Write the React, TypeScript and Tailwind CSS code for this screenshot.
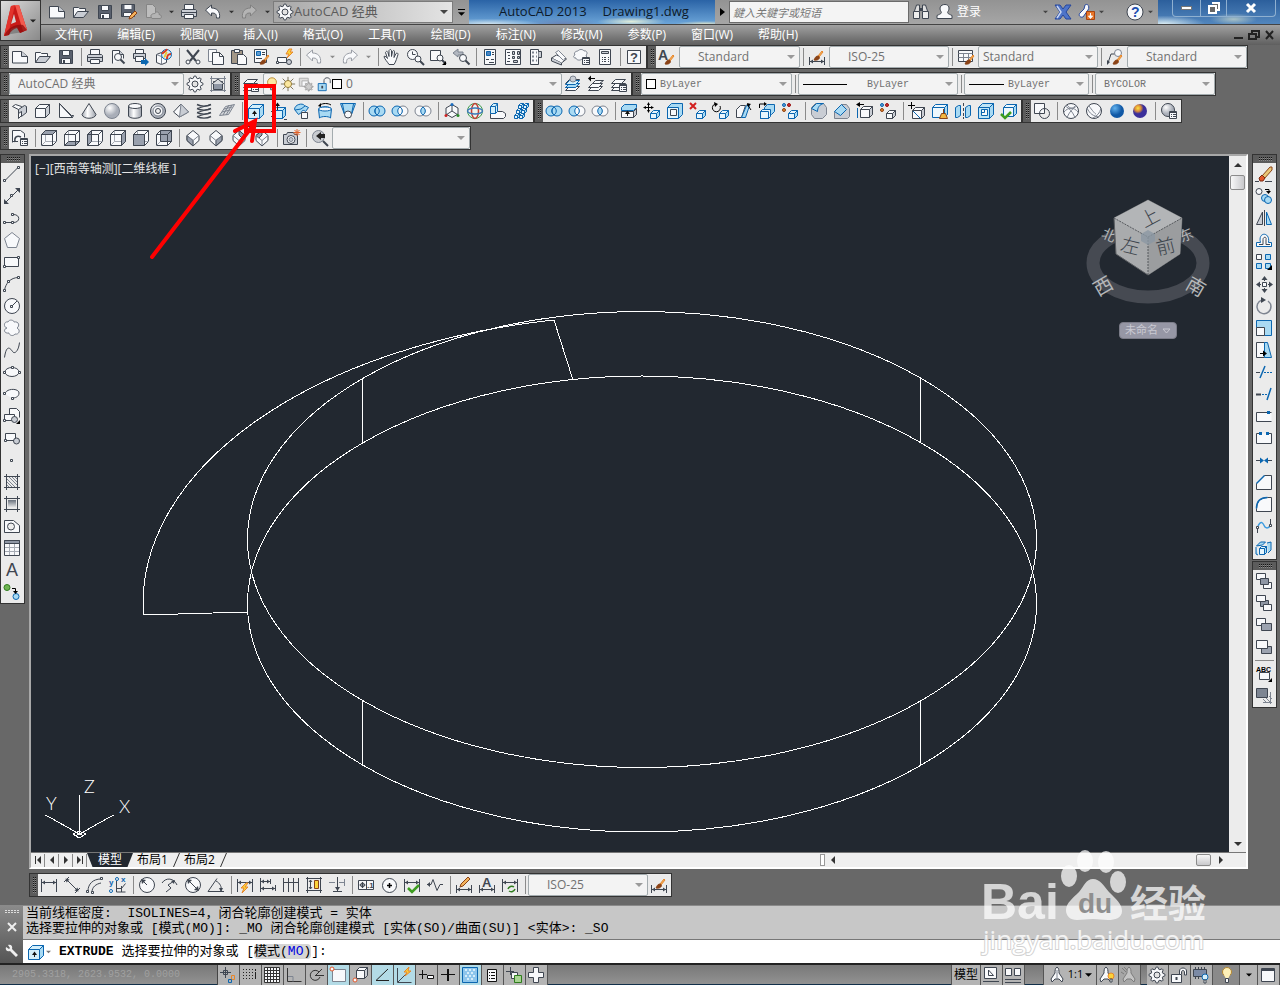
import { useState } from 'react';
import type { ReactNode } from 'react';

type Path = [d: string, stroke?: string, fill?: string, width?: number];
type Glyph = { t: string; x: number; y: number; size: number; fill?: string; bold?: boolean };
type Shape = Path | Glyph;

const K = '#3f4651';
const W = '#f8f9fb';
const G = '#c9cdd4';
const D = '#7d8490';
const B = '#0b66b0';
const LB = '#a9daf3';
const N = 'none';
const OR = '#e8862a';
const BR = '#8a4216';

const c = (x: number, y: number, r: number) => `M${x - r} ${y}a${r} ${r} 0 1 0 ${r * 2} 0a${r} ${r} 0 1 0 ${-r * 2} 0z`;
const el = (x: number, y: number, rx: number, ry: number) =>
  `M${x - rx} ${y}a${rx} ${ry} 0 1 0 ${rx * 2} 0a${rx} ${ry} 0 1 0 ${-rx * 2} 0z`;
const r = (x: number, y: number, w: number, h: number) => `M${x} ${y}h${w}v${h}h${-w}z`;
const node = (x: number, y: number): Path => [r(x + 0.5, y + 0.5, 2, 2), K, W];

const cube = (x: number, y: number, w: number, h: number, d: number, s = K, f = W, side = G): Shape[] => [
  [`M${x} ${y + d}l${d} ${-d}h${w}v${h}l${-d} ${d}h${-w}z`, s, f],
  [`M${x + w} ${y + d}l${d} ${-d}v${h}l${-d} ${d}z`, s, side],
  [`M${x} ${y + d}h${w}`, s],
];

const gear = (x: number, y: number, ro: number, ri: number, n = 8) => {
  let d = '';
  for (let i = 0; i < n * 4; i++) {
    const a = ((i - 0.5) / (n * 4)) * Math.PI * 2;
    const q = i % 4 < 2 ? ro : ri;
    d += `${i ? 'L' : 'M'}${(x + Math.cos(a) * q).toFixed(2)} ${(y + Math.sin(a) * q).toFixed(2)}`;
  }
  return d + 'z';
};

const brush = (x: number, y: number): Shape[] => [
  [`M${x + 4} ${y + 4}l4 -5 1 1 -4 5z`, OR, '#f3b25c'],
  [`M${x} ${y + 8}c1 -1 1 -4 4 -4 3 1 1 5 -4 4z`, BR, BR],
];
const magnifier = (x: number, y: number, q: number): Shape[] => [
  [c(x, y, q), K, W],
  [`M${x + q - 1} ${y + q - 1}l4 4`, K, N, 2],
];
const listBadge: Shape[] = [
  [r(9.5, 9.5, 7, 7), K, W],
  ['M9 10.5h8', K],
  ['M11 12.5h1M13 12.5h3M11 14.5h1M13 14.5h3', K],
];
const dimBase: Shape[] = [['M1.5 3v13M16.5 3v13', K], ['M2 6.5h14', K], ['M5 4.5l-3 2 3 2zM13 4.5l3 2-3 2z', N, K]];
const dimLow: Shape[] = [['M1.5 9v8M16.5 9v8', K], ['M2 13.5h14', K], ['M5 11.5l-3 2 3 2zM13 11.5l3 2-3 2z', N, K]];
const viewCube = (face: string): Shape[] => [
  ['M1.5 5.5l4-4h11v11l-4 4h-11z', K, W],
  ['M5.5 2v10.5h11M5.5 12.5l-4 4', '#a6abb4'],
  [face, K, '#99a0ad'],
  ['M1.5 5.5h11v11M12.5 5.5l4-4', K],
];
const iso = (face: string): Shape[] => [
  ['M9 1.5l6 5v5l-6 5.5-6-5.500v-5z', K, W],
  [face, K, '#99a0ad'],
  ['M3 6.5l6 5 6-5M9 11.5v5', D],
];
const stack = (f: string): Shape[] => [
  ['M1.5 15.5l4-4h10l-4 4z', K, W],
  ['M1.5 12.5l4-4h10l-4 4z', K, W],
  ['M1.5 8.5l4-4h10l-4 4z', K, f],
];
const smallCube = cube(7.5, 8.5, 6, 5, 3, B, '#e7f5fd', LB);
const upArrow = (x: number, y: number, h: number): Shape[] => [
  [`M${x} ${y + h}v${-h + 1}`, '#222'],
  [`M${x - 2.5} ${y + 3}l2.5 -3.500 2.5 3.500z`, N, '#111'],
];
const miniCube = (x: number, y: number) => cube(x, y, 3, 3, 2, B, '#e5f5fd', LB);

const icons: Record<string, Shape[]> = {
  new: [['M1.5 3.5h9l6 5v6.5h-15z', K, W], ['M10.5 3.5v5h6', K, G]],
  open: [['M1.5 14.5v-10h5l1 1h6v3', K, W], ['M1.5 14.5l4-6h11l-5 6z', K, G]],
  save: [[r(2.5, 2.5, 13, 13), K, '#5a616e'], [r(5.5, 2.5, 7, 5), K, W], [r(4.5, 10.5, 9, 5), K, W], [r(6, 12, 2, 3), N, K]],
  saveas: [[r(1.5, 1.5, 13, 12), K, '#5a616e'], [r(4.5, 2, 7, 4), N, W], [r(3.5, 9.5, 8, 4), K, W], ['M9 16l1-3 5-5 2 2-5 5z', BR, '#f3b25c']],
  cloud: [['M2.5 1.5h6l3 3v10h-9z', '#858585', '#bdbdbd'], ['M8 15.5c-3-4 1-5 3-5 1-3 5-1 4 1 3 0 3 4 1 4z', '#858585', '#b4b4b4']],
  print: [['M4.5 7v-5.5h9v5.5', K, W], ['M1.5 7.5l1-1h13l1 1v6h-15z', K, G], ['M2 9.5h14', K], [r(4.5, 11.5, 9, 4), K, W]],
  preview: [['M3.5 15.5v-13h7l4 4v4', K, W], ['M10.5 2.5v4h4', K, G], ...magnifier(9, 9, 3.5)],
  publish: [['M3.5 5v-3.5h8v3.5', K, W], [r(1.5, 5.5, 12, 5), K, G], [r(3.5, 8.5, 8, 5), K, W], ['M9 12h4v-2l4 4-4 4v-2h-4z', N, B]],
  globe: [['M1.5 6.5l5-2 5 2v8l-5 2-5-2z', K, W], ['M1.5 6.5l5 2 5-2M6.5 8.5v8', D], [c(11.5, 6.5, 5), B, '#d6effa'], ['M7 6c2-3 4-2 5-5M12 11c0-5 2-5 4-5', '#d93820', N, 2], ['M9 9c2-1 1-3 3-5', '#e9c93c', N, 2]],
  cut: [['M3 2l9 11M15 2l-9 11', K, N, 2], [c(4, 14, 2), K, W], [c(14, 14, 2), K, W]],
  copy: [[r(1.5, 1.5, 8, 12), D, W], ['M5.5 4.5h7l4 4v8h-11z', K, W], ['M12.5 4.5v4h4', K]],
  paste: [[r(1.5, 2.5, 11, 13), K, '#a39787'], [r(4.5, 1.5, 5, 3), K, W], ['M7.5 6.5h6l3 3v7h-9z', K, W]],
  match: [[r(1.5, 1.5, 12, 13), K, W], [r(3.5, 3.5, 4, 4), B, '#5e9bd0'], ['M9 4.5h3M9 6.5h3M3 10.5h6', K], ...brush(7, 8)],
  blockedit: [[r(1.5, 9.5, 9, 5), K, W], node(0, 13), [c(13, 14, 2.5), K, G], ['M13 1l-3 5h3l-2 4 6-6h-3l2-3z', OR, '#fbd23a']],
  undo: [['M1.5 7l6-5v3c5 0 9 3 8 10h-3c0-4-1-5-5-5v3z', K, W]],
  redo: [['M16.5 7l-6-5v3c-5 0-9 3-8 10h3c0-4 1-5 5-5v3z', '#808080', '#b4b4b4']],
  undo2: [['M1.5 7l6-5v3c5 0 9 3 8 10h-3c0-4-1-5-5-5v3z', '#9a9ea6', W]],
  redo2: [['M16.5 7l-6-5v3c-5 0-9 3-8 10h3c0-4 1-5 5-5v3z', '#9a9ea6', W]],
  pan: [['M6 16.500c-1-2-5-6-5-8 1-1 3 1 3.500 2l-2-6c1-2 2-1 2.500 0l1 4v-6c1-1.500 2-1 2.500 0v6l1-5c1-1.500 2-1 2 0l-.500 6 2-4c1-1 2.500 0 2 1-1 3-2 7-4 10z', K, W]],
  zoomrt: [[c(6.5, 6.5, 5), K, W], ['M6.5 3.5v3h3', K], ...magnifier(12, 11, 3)],
  zoomwin: [[r(1.5, 2.5, 10, 10), K, W], ...magnifier(11, 10, 3), ['M17 13v4h-4z', N, '#000']],
  zoomprev: [['M1 5l5-4v3h5v3h-5v2z', D, '#b2b7c0'], ...magnifier(11, 10, 3.5)],
  props: [[r(3.5, 1.5, 11, 15), K, W], [r(5.5, 3.5, 4, 4), B, '#4d83bc'], ['M11 4.5h2M11 6.5h2', K], ['M5 11.5h3M10 11.5h3M8 14.5h5', K]],
  dc: [[r(1.5, 1.5, 15, 15), K, W], ['M3 4.5h3M4 7.5h2M4 10.5h2M3 13.5h3', K], ['M8.5 3.5h2v3h-2zM13.5 3.5h2v3h-2zM8.5 8.5h2v2h-2zM13.5 8.5h2v2h-2zM9.5 12.5h4v2h-4z', K, G]],
  toolpal: [[r(3.5, 1.5, 8, 15), K, W], ['M5 4.5h2M9 4.5h1M5 8.5h2M9 8.5h1M5 12.5h2M9 12.5h1', D, N, 2], ['M11.5 3.5h3v6h-3', K, G]],
  sheetset: [['M1.5 10l5-3 10 4-5 4z', K, W], ['M5.5 4.5l3-2 7 7-2 3z', D, W], ['M1.5 10v3l10 4v-2', K, G]],
  markup: [['M2 7c-2-3 2-4 3-4 1-2 5-2 6 0 3-1 4 3 2 4 2 3-2 5-4 4-2 2-6 1-6-1-3 0-3-2-1-3z', D, W], ...listBadge],
  calc: [[r(3.5, 1.5, 11, 15), K, W], [r(5.5, 3.5, 7, 2), K, G], ['M6 9.5h1M8 9.5h2M12 9.5h1M6 11.5h1M8 11.5h2M12 11.5h1M6 13.5h1M8 13.5h2M12 13.5h1', K]],
  help: [[r(2.5, 2.5, 13, 13), K, W], { t: '?', x: 5, y: 14, size: 13, bold: true }],
  textstyle: [{ t: 'A', x: 0, y: 12, size: 14, bold: true }, ...brush(7, 8)],
  dimstyle: [...dimLow, ...brush(6, 4)],
  tablestyle: [[r(1.5, 2.5, 14, 11), K, W], ['M1.5 5.5h14M1.5 9.5h14M6.5 5v8M11.5 5v8', D], ...brush(8, 8)],
  mleader: [['M2 15l3-9h4', K], ['M1 12v5l3-3z', N, K], [c(12, 5, 3.5), D, W], ...brush(7, 8)],
  gear: [[gear(9, 9, 8, 6), K, W], [c(9, 9, 3), K, '#e4e4e4']],
  wsset: [['M2.5 1v16M15.5 1v16M1 3.5h16M1 15.5h16', D, N], [r(4.5, 6.5, 9, 8), K, '#8e96a4'], ['M3 9l6-5 6 5', K, '#d7dade']],
  layers: [...stack(W), ...listBadge],
  bulb: [[c(9, 7, 5), '#b5862e', '#fce9a4'], [r(7.5, 12.5, 3, 3), K, G]],
  sun: [['M9 1v16M1 9h16M3 3l12 12M15 3l-12 12', '#70684e'], [c(9, 9, 4), '#8f7430', '#fbe8a0']],
  vpfreeze: [[r(1.5, 2.5, 10, 9), '#aaa', '#ddd'], [r(4.5, 5.5, 7, 6), '#aaa', W], [gear(12, 12, 5, 3), '#999', '#ccc']],
  lock: [['M9 9v-4c0-4 7-4 7 0v3', K], [r(2.5, 8.5, 9, 8), B, LB], ['M7 11v3', K, N, 2]],
  layerA: [...stack(W), ['M1.5 12.5l4-4h10l-4 4z', B, LB], ['M1.5 9.5l4-4h10l-4 4z', B, '#d3effb'], [c(9, 4, 3), D, G]],
  layerB: [...stack(W).slice(0, 2), ['M5.5 8.5l3-3h8l-4 3z', K, W], ['M3 3.5h5', '#000'], ['M1 3.5l3-3v6z', N, '#000']],
  layerC: [...stack(W), ...listBadge],
  polysolid: [['M1.5 4.5l3-2 6 2v9l-3 3v-9z', K, W], ['M7.5 7.5l6-4 2 1v6l-5 4v-5l-3 2z', K, G]],
  box: cube(1.5, 2.5, 10, 9, 4),
  wedge: [['M2.5 1.5v14h13z', K, W], ['M2.5 1.5l12 12h2l-1 2z', K, G]],
  cone: [['M9 1.5l-7 11c1 5 13 5 14 0z', K, 'url(#metal)']],
  sphere: [[c(9, 9, 7.5), D, 'url(#steel)']],
  cylinder: [['M2.5 4v10c1 3 12 3 13 0v-10', K, 'url(#metal)'], [el(9, 4, 6.5, 2.5), K, W]],
  torus: [[c(9, 9, 7.5), K, 'url(#steel)'], [c(9, 9, 5), D, W], [c(9, 9, 2.5), K, '#eee']],
  pyramid: [['M9 2l-7.5 8 6 5 9-5z', K, W], ['M9 2l-1.5 13 9-5z', D, G]],
  helix: [['M2 2.5c4 2 10 2 14 0M2 6.5c4 2 10 2 14 0M2 10.5c4 2 10 2 14 0M2 14.5c4 2 10 2 14 0', K, N, 1.5], ['M2 6.5l14-4M2 10.5l14-4M2 14.5l14-4', K]],
  planesurf: [['M1.5 13.5l6-9 9-2-6 10z', D, '#d6d9dd'], ['M4 10l8-2M6 7l8-2M5 13l6-10M8 13l6-10', D]],
  extrude: [...cube(1.5, 2.5, 11, 10, 4, B, '#d3effb', LB), ...upArrow(7.5, 9, 5)],
  presspull: [...cube(3.5, 5.5, 9, 8, 3, B, '#d3effb', LB), ...upArrow(7.5, 1, 7), ['M1 9.5h3M1 14.5h3M14 17.5h3', K]],
  sweep: [['M1.5 7.5c0-5 8-7 10-4l4 2-3 4c-2-2-4-1-4 1l-3 2z', B, LB], ['M2 8l6-1 4-3', B], [r(8.5, 10.5, 6, 6), K, W]],
  revolve: [['M2.5 7c3-3 11-3 13 0l-1 9c-2-2-9-2-11 0z', B, LB], [el(9, 7, 6.5, 2), B, W], ['M4 3c3-2 8-2 11 0', '#000'], ['M2 4l3-3v4z', N, '#000']],
  loft: [['M1.5 1.5h15l-4 11c-2 3-5 3-7 0z', B, LB], ['M5.5 12l-2-10M12.5 12l2-10', B], [c(9, 12.5, 3.5), K, W]],
  union: [[c(6, 9, 5), B, LB], [c(12, 9, 5), B, LB], ['M9 5c-3 2-3 6 0 8 3-2 3-6 0-8z', B, N]],
  subtract: [[c(12, 9, 5), D, W], [c(6, 9, 5), B, LB], ['M9 5c-3 2-3 6 0 8 3-2 3-6 0-8z', B, W]],
  intersect: [[c(12, 9, 5), D, W], [c(6, 9, 5), D, W], ['M9 5c-3 2-3 6 0 8 3-2 3-6 0-8z', B, LB]],
  move3d: [['M9 2.5l6 3.5v6l-6 3.5-6-3.5v-6z', K, W], ['M9 2v7l6 4M9 9l-6 4', K], [c(9, 2.5, 1.5), N, '#1a6cc0'], [c(3, 13.5, 1.5), N, '#c22'], [c(15, 13.5, 1.5), N, '#2a8a2a']],
  rotate3d: [[c(9, 9, 7.5), '#3c9b4c', '#eef3ee'], [el(9, 9, 3.5, 7.5), '#c33f33', N, 1.5], [el(9, 9, 7.5, 3), '#3c7ab8', N, 1.5]],
  align3d: [['M1.5 11.5l2-2h10l3 2v3l-2 2h-13z', K, W], ['M1.5 4.5l3-3h4v8l-2 2h-5z', B, '#d3effb'], ['M1.5 4.5h5l2-3M6.5 4.5v7', B]],
  array3d: [...miniCube(6.5, 1.5), ...miniCube(11.5, 1.5), ...miniCube(4.5, 6.5), ...miniCube(9.5, 6.5), ...miniCube(2.5, 11.5), ...miniCube(7.5, 11.5)],
  extrudeface: [...cube(1.5, 6.5, 12, 6, 3, K, W, G), ['M1.5 5.5l3-3h12v3l-3 3h-12z', B, LB], ...upArrow(7.5, 9, 5)],
  moveface: [...smallCube, ['M5.5 1v9M1 5.5h9', '#000'], ['M4 3l1.5-3 1.500 3zM4 8l1.500 3 1.500-3zM3 4l-3 1.500 3 1.500zM8 4l3 1.500-3 1.500z', N, '#000']],
  offsetface: [['M1.5 5.5l4-4h11v11l-4 4h-11z', B, LB], [r(1.5, 5.5, 11, 11), B, '#e5f5fd'], [r(4.5, 7.5, 6, 6), K, W]],
  deleteface: [...smallCube, ['M1 1l6 6M7 1l-6 6', '#d21f1f', N, 2]],
  rotateface: [...smallCube, ['M3 2a4 4 0 1 0 5 2', '#000', N], ['M2 0l4 2-3 3z', N, '#000']],
  taperface: [['M1.5 15.5v-8l4-4h5l-4 12z', K, W], ['M6.5 15.5l5-12h3l-4 12z', B, LB], ['M16 8l-4-6', '#000'], ['M12 1l4 1-3 3z', N, '#000']],
  copyface: [['M6.5 5.5l3-3h7v7l-3 3h-7z', B, LB], ['M2.5 9.5l2-2h8v7l-2 2h-8z', B, '#e5f5fd'], [r(2.5, 9.5, 8, 7), B, N], ['M1.5 6v-4h6', '#000'], ['M6 0l3 2-3 2z', N, '#000']],
  colorface: [...smallCube, [c(3, 3, 1.5), B, '#5b9bd5'], [c(8, 3, 1.5), '#911', '#c33'], [c(3, 8, 1.5), BR, OR]],
  filletedge: [['M1.5 12.5v-7l4-4h8l3 4v7l-4 4h-8z', D, G], ['M1.5 6.500l5-5h7c-4 1-6 4-6 8z', B, LB]],
  chamferedge: [['M1.5 9.5l7-7h5l3 4v8l-2 2h-13z', D, G], ['M1.5 9.5l7-7 5 5-6 6z', B, LB]],
  copyedge: [...cube(4.5, 4.5, 9, 8, 3), ['M1.5 6v10', B], ['M3 2.5h5', '#000'], ['M0 2.5l4-2.500v5z', N, '#000']],
  coloredge: [...cube(7.5, 8.5, 6, 5, 3), [c(3, 3, 1.5), B, '#5b9bd5'], [c(8, 3, 1.5), '#911', '#c33'], [c(3, 8, 1.5), BR, OR]],
  imprint: [...cube(4.5, 5.5, 9, 8, 3), ['M5 9l8 8', B], ['M3.5 0v7M0 3.5h7', '#000']],
  clean: [...cube(1.5, 2.5, 12, 10, 3, B, '#eef8fd', LB), ['M12.5 7v4M10.5 11.5h4l2 5h-8z', BR, '#f3b640']],
  separate: [['M1.5 5.5l3-2h2v10l-3 2h-2z', B, LB], ['M11.5 5.5l3-2h2v10l-3 2h-2z', B, LB], ['M9.5 1v3M9.5 6v3M9.5 11v3M9.5 15v2', K]],
  shell: [...cube(1.5, 1.5, 11, 11, 4, B, '#bfe5f7', LB), [r(4.5, 7.5, 6, 6), B, W], ['M4.5 10.5h3v-3', B]],
  check: [...cube(3.5, 2.5, 10, 9, 3, B, '#eef8fd', LB), ['M1 12l4 4 6-6', '#3d9d20', N, 2.5]],
  wire2d: [[r(1.5, 1.5, 10, 10), K, W], [c(11.5, 11.5, 5), K, N]],
  wire3d: [[c(9, 9, 7.5), K, W], ['M3 4c4 2 8 6 10 12M15 4c-4 2-8 6-10 12M2 10c4-5 10-5 14 0M5 3c3 4 6 4 9 0', D]],
  hidden: [[c(9, 9, 7.5), K, W], ['M2 6c3 6 6 8 12 9M16 6c-1 5-4 8-8 10M4 4c3 4 6 8 7 8', D]],
  realistic: [[c(9, 9, 7), N, 'url(#blue)']],
  conceptual: [[c(9, 9, 7), N, 'url(#gooch)']],
  vsmanager: [[c(8, 8, 6.5), K, 'url(#steel)'], ...listBadge],
  namedview: [['M1.5 13.5v-12h8l4 3v4', K, W], ['M4 13c-1-5 2-7 6-5', K, N, 1.5], ['M1 12.5h6', K], ...listBadge],
  vtop: viewCube('M1.5 5.5l4-4h11l-4 4z'),
  vbottom: viewCube('M1.5 16.5l4-4h11l-4 4z'),
  vleft: viewCube('M1.5 5.5l4-4v11l-4 4z'),
  vright: viewCube('M12.5 5.5l4-4v11l-4 4z'),
  vfront: viewCube('M1.5 5.5h11v11h-11z'),
  vback: viewCube('M5.5 1.5h11v11h-11z'),
  sw: iso('M3 6.5l6 5v5.500l-6-5.500z'),
  se: iso('M9 11.5l6-5v5l-6 5.500z'),
  ne: iso('M9 1.500l6 5-3 2.500-3-3z'),
  nw: iso('M9 1.500l-6 5 3 2.500 3-3z'),
  camera: [['M1.5 5.5h3l1-2h6l1 2h3v10h-14z', K, G], [c(9, 10.5, 4), K, W], [c(9, 10.5, 2), D, G], ['M15 0v7M11.5 3.5h7M12.5 1l5 5M17.5 1l-5 5', '#e2632a']],
  camzoom: [[c(7.5, 7.5, 6), D, '#c9ccd1'], ['M5 7l5-4v2h4v4h-4v2z', N, '#222'], ['M12 12l5 5', K, N, 2]],
  line: [['M2 15.5l13-13', K], node(0, 14), node(14, 1)],
  xline: [['M2 16l14-14', K], ['M1 12v5h5zM17 6v-5h-5z', N, K], node(7, 7)],
  pline: [['M1.5 13.5h9c7 0 7-8 0-8', K], node(0, 12), node(8, 12), node(8, 4)],
  polygon: [['M9 1.5l7.5 6-3 9h-9l-3-9z', D, W]],
  rect: [[r(1.5, 4.5, 14, 9), K, W], node(0, 12), node(14, 3)],
  arc: [['M1.5 15.5c1-7 6-13 14-13', K], node(0, 14), node(4, 5), node(14, 1)],
  circle: [[c(9, 9, 7.5), K, W], ['M9 9l5-5', K], node(7, 8)],
  revcloud: [['M4 9c-4-1-3-7 1-6 1-3 6-2 6 0 5-1 6 4 3 6 4 2 2 7-2 6-2 3-6 1-6-1-5 1-6-4-2-5z', D, W]],
  spline: [['M1.5 16.500c2-14 6-9 8-6s6 0 7-9', K]],
  ellipse: [[el(9, 9, 7, 4.5), K, W], node(0, 8), node(15, 8), node(8, 3)],
  ellipsearc: [['M2 9c1-6 14-6 14-1 0 4-4 5-7 5', K, W], node(0, 7), node(8, 12)],
  insert: [['M6.5 9.5v-8h7l3 3v6', K, W], [r(1.5, 7.5, 10, 6), K, W], [c(11.5, 12.5, 3), K, G], node(0, 12), ['M17 13v4h-4z', N, '#000']],
  block: [[r(2.5, 4.5, 10, 7), K, W], [c(13.5, 12, 3), K, G], node(1, 10)],
  point: [node(7, 8)],
  hatch: [['M3.5 1v16M14.5 1v16M1 3.5h16M1 14.5h16', K], ['M4 6l8 8M4 9l5 5M6 4l8 8M9 4l5 5M4 12l2 2M12 4l2 2', D]],
  gradient: [['M3.5 1v16M14.5 1v16M1 3.5h16M1 14.5h16', K], [r(5, 5, 8, 8), N, 'url(#fade)']],
  region: [['M1.5 3.5h9l6 5v7h-15z', K, W], [c(8, 9.5, 3.5), K, '#eee']],
  table: [[r(1.5, 1.5, 15, 15), K, W], [r(1.5, 1.5, 15, 3), K, '#8e96a4'], ['M2 8.5h14M2 12.5h14M6.5 5v11M11.5 5v11', '#a6abb4']],
  mtext: [{ t: 'A', x: 3, y: 15, size: 18 }],
  addsel: [[c(4, 4.5, 3), '#2f7d1d', '#6fb552'], [c(13, 13.5, 3), B, LB], ['M9 5.5h3.5v3', '#000'], ['M10 8h5l-2.500 3z', N, '#000']],
  erase: [['M7 11l8-9 2 0v3l-8 9z', BR, '#e9c777'], ['M4 13l3-3 3 3-2 3h-3z', '#7a2a10', '#e2572b'], ['M0 16.5h4M10 16.5h7', K]],
  copyobj: [[c(4, 4.5, 3), K, W], [c(10, 11, 3.5), B, LB], [c(13, 13, 3.5), B, LB], ['M10 2.5h4v2', '#000'], ['M11 4h5l-2.500 3z', N, '#000']],
  mirror: [['M7.5 3v12.5h-6z', K, G], ['M11.5 3v12.5h5z', B, LB], ['M9.5 1v16', K]],
  offset: [['M1.5 15.5v-4h4c-3-11 10-11 8 0h3v4z', B, W], ['M4 13.5h4v-5c0-3 4-3 3 0v5h4', K, N]],
  array: [[r(1.5, 1.5, 5, 5), K, W], [r(10.5, 1.5, 5, 5), B, LB], [r(1.5, 10.5, 5, 5), B, LB], [r(10.5, 10.5, 5, 5), B, LB], ['M17 12v5h-5z', N, '#000']],
  move: [['M9.5 2v4M9.5 13v4M2 9.5h4M13 9.5h4', K], ['M6.5 5l3-4 3 4zM6.5 14l3 4 3-4zM5 6.5l-4 3 4 3zM14 6.5l4 3-4 3z', N, K], [r(7.5, 7.5, 4, 4), K, W]],
  rotate: [['M7 3a7 7 0 1 0 6 1', D, N, 1.5], ['M6 0l5 3-5 3z', N, K]],
  scale: [[r(1.5, 1.5, 15, 15), B, LB], [r(1.5, 8.5, 8, 8), K, W]],
  stretch: [[r(1.5, 1.5, 8, 15), K, W], ['M9.5 1.5h3l4 15h-7z', B, LB], ['M5 12.5h5', '#000'], ['M8 9.500l4 3-4 3z', N, '#000']],
  trim: [['M1 9.5h4', K], ['M9 9.5h2M12 9.5h2M15 9.5h2', B], ['M5 15l5-12', B, N, 1.5]],
  extend: [['M1 9.5h5', K, N, 2], ['M7 9.5h2M10 9.5h2', B], ['M12 15l4-12', B, N, 1.5]],
  breakpt: [['M16.5 5.5h-15v9h15', K, W], [r(12, 4, 3, 3), N, B]],
  break: [['M4 4.5h-2.5v10h15v-10h-2.5', K, W], [r(4, 3, 3, 3), N, B], [r(11, 3, 3, 3), N, B]],
  join: [['M1 9.5h5M12 9.5h5', K], ['M5 6.5l4 3-4 3zM13 6.5l-4 3 4 3z', N, B]],
  chamfer: [['M9.5 2.5h7v14h-15v-6l8-8', K, W], ['M1.5 10.5l8-8', B, N, 1.5]],
  fillet: [['M12.5 2.5h4v14h-15v-3c0-7 4-11 11-11', K, W], ['M1.5 13.5c0-7 4-11 11-11', B, N, 1.5]],
  blend: [['M2.5 16v-6M15.5 2v6', K, N], ['M3 9c4-8 6 0 7 1s4 2 5-2', '#3b9be0', N, 1.5], node(1, 9), node(14, 7)],
  explode: [...cube(4.5, 7.5, 5, 6, 2, B, '#e5f5fd', LB), ['M1.5 7l4-4h5l-3 3zM12 4l4-1v8l-3 3M1 8v7l2 1', B, LB]],
  above: [[r(1.5, 1.5, 9, 6), K, W], [r(8.5, 10.5, 8, 6), K, W], [r(5.5, 6.5, 8, 6), K, '#8e96a4']],
  below: [[r(5.5, 6.5, 8, 6), K, '#8e96a4'], [r(1.5, 1.5, 9, 6), K, W], [r(8.5, 10.5, 8, 6), K, W]],
  front: [[r(1.5, 2.5, 9, 7), K, W], [r(6.5, 7.5, 10, 7), K, '#9ba2af']],
  back: [[r(6.5, 8.5, 10, 7), K, '#9ba2af'], [r(1.5, 2.5, 11, 8), K, W]],
  annofront: [[r(4.5, 7.5, 10, 7), K, W], { t: 'ABC', x: 1, y: 7, size: 7, bold: true, fill: '#000' }, ['M17 13v4h-4z', N, '#000']],
  hatchback: [[r(1.5, 1.5, 11, 9), K, '#7d8592'], ['M15.5 5v12M8 15.5h9M8 12l4 4M11 11l5 5M14 9l3 3', D]],
  linear: dimBase,
  aligned: [['M1 6l5-5M12 17l5-5', K], ['M4 4l10 10', K], ['M2.5 2.5l4 1-3 3zM15.5 15.5l-4-1 3-3z', N, K]],
  arclen: [['M2 15c0-7 5-12 13-12', K], ['M6 16c0-5 4-8 9-9', K], node(0, 14), node(14, 1), node(5, 15)],
  ordinate: [['M7.5 5v11h9M7.5 12.5h5l4-5M12.5 16v-6', K], { t: 'x', x: 12, y: 6, size: 8, bold: true, fill: B }, { t: 'y', x: 0, y: 9, size: 8, bold: true, fill: B }, [c(8, 3, 1.5), B, W], [c(2, 15, 1.5), B, W]],
  radius: [[c(9, 9, 7.5), K, W], ['M9 9l-5-5', K], ['M3 3l5 1-4 4z', N, K]],
  jogged: [['M1 7c4-6 12-5 15 2', K], ['M5 16l5-4-3-3 6-4', K], ['M14 4l-1 4-3-3z', N, K]],
  diameter: [[c(9, 9, 7.5), K, W], ['M4 4l10 10', K], ['M3 3l5 1-4 4zM15 15l-5-1 4-4z', N, K]],
  angular: [['M1 15.5h16M1 15.5l9-13', K], ['M9 5c4 2 6 6 5 10', K], ['M12 12l2 4 2-4z', N, K]],
  quick: [...dimBase, ['M10 7l-5 5h3l-2 5 6-6h-3l3-4z', OR, '#fbd23a']],
  baseline: [['M1.5 2v14M11.5 3v5', K], ['M2 5.5h9M2 12.5h14M16.5 9v6', K], ['M5 3.5l-3 2 3 2zM8 3.500l3 2-3 2zM5 10.500l-3 2 3 2zM13 10.500l3 2-3 2z', N, K]],
  continue: [['M1.5 2v14M6.5 2v14M11.5 2v14M16.5 2v14', K], ['M2 6.5h14', K]],
  space: [['M1 2.5h16M1 14.5h16M2.5 1v16M15.5 1v16', K], [r(9.5, 4.5, 4, 8), BR, '#fbd23a'], ['M5.5 4v9M4 6l1.5-2 1.5 2M4 11l1.5 2 1.5-2', K]],
  dimbreak: [['M1 6.5h6M11 6.5h5', D], ['M16.5 3v7', D], ['M9.5 1v14M5 15.5h9', K], ['M7 11h5l-2.500 4z', N, K]],
  tolerance: [[r(1.5, 4.5, 15, 9), K, W], ['M9.5 5v8M5.5 6v6M2.5 9h6', K], [c(5.5, 9, 2), K, N], { t: '.1', x: 10, y: 12, size: 8, bold: true }],
  center: [[c(9.5, 9.5, 7), K, W], ['M9.5 7v5M7 9.5h5', '#000', N, 1.5]],
  inspect: [...dimBase, ['M5 12l4 4 7-7', '#3d9d20', N, 2.5]],
  jogline: [['M1 8.5h4l2-5 4 11 3-6h3', K], ['M4 6l-3 2.500 3 2.500z', N, K]],
  dimedit: [...dimLow, ['M5 11l1-3 7-7 2 2-7 7z', BR, '#f3b25c']],
  dimtext: [...dimLow, { t: 'A', x: 4, y: 11, size: 13, bold: true }],
  dimupdate: [...dimBase, ['M7 13a4 4 0 0 1 6-2M14 13a4 4 0 0 1-6 2', '#2f7d1d', N, 1.5]],
  infer: [['M6.5 1v11M1 6.5h11', K], [r(4.5, 4.5, 4, 4), K, N], [r(12.5, 9.5, 3, 4), OR, N], [r(9.5, 13.5, 3, 3), B, N]],
  snap: [['M2 3.5h1M5 3.5h1M8 3.5h1M11 3.5h1M2 6.5h1M5 6.5h1M8 6.5h1M11 6.5h1M2 9.5h1M5 9.5h1M8 9.5h1M11 9.5h1M2 12.5h1M5 12.5h1M8 12.5h1M11 12.5h1', '#222'], ['M14.5 3v2M14.5 6v7', '#222']],
  grid: [[r(1.5, 1.5, 15, 15), '#333', W], ['M4.5 1v16M7.5 1v16M10.5 1v16M13.5 1v16M1 4.5h16M1 7.5h16M1 10.5h16M1 13.5h16', '#333']],
  ortho: [['M2.5 2v13.5h14', '#333'], ['M3 10.5h5v5', D]],
  polar: [['M12 6a5 5 0 1 0 1 5M8 10l7-7M8 9.5h9', '#333']],
  osnap: [[r(3.5, 3.5, 13, 12), D, W], [c(3, 3, 2), '#e2572b', W]],
  osnap3d: [...cube(5.5, 1.5, 8, 8, 3), [c(4, 14, 2), '#e2572b', W]],
  otrack: [['M15 3l-12 11.5h13', '#222', N, 1]],
  ducs: [['M2.5 2v14.5h14M3 16l9-9', K], ['M14 1l-5 5h3l-2 4 6-5h-3z', OR, '#fbd23a']],
  dyn: [['M5.5 4v9M2 8.5h8', '#111'], [r(10.5, 9.5, 6, 3), '#111', W]],
  lwt: [['M2 8.5h14', '#111'], ['M9 3v12', '#111', N, 2]],
  tpy: [[r(1.5, 1.5, 15, 15), B, '#8ec6ec'], ['M4 4h2M8 4h2M12 4h2M6 7h2M10 7h2M4 10h2M8 10h2M12 10h2M6 13h2M10 13h2', '#d7edfa', N, 2]],
  qp: [[r(4.5, 3.5, 9, 12), '#111', W], ['M6 6.5h1M8 6.5h4M6 9.5h1M8 9.5h4M6 12.5h1M8 12.5h4', '#111']],
  sc: [['M5.5 1v8M1 5.5h8', K], [r(6.5, 6.5, 6, 6), K, W], [r(9.5, 9.5, 7, 7), '#2f7d1d', '#a8d492']],
  am: [['M6.5 1.5h5v5h5v5h-5v5h-5v-5h-5v-5h5z', K, W]],
  sheet: [[r(2.5, 1.5, 12, 11), K, W], ['M6.5 4v5.5h5z', K, N], ['M1 15.5h16', K]],
  qview: [[r(1.5, 2.5, 6, 7), K, W], [r(10.5, 2.5, 6, 7), K, W], ['M1 13.5h16M1 16.5h16', K]],
  anno: [['M9 1c2 1 2 4 2 6l4 6-1 3-3-3h-4l-3 3-1-3 4-6c0-2 0-5 2-6z', K, W], ['M9 4v9', D]],
  annovis: [['M8 1c2 1 2 4 2 6l4 6-1 3-3-3h-4l-3 3-1-3 4-6c0-2 0-5 2-6z', K, W], [c(13, 10, 3), OR, '#fbd23a'], [r(12, 13, 2, 3), K, W]],
  annoauto: [['M9 1c2 1 2 4 2 6l4 6-1 3-3-3h-4l-3 3-1-3 4-6c0-2 0-5 2-6z', '#7c7c7c', '#c4c4c4'], ['M2 2l4 4M1 6l3 2M4 1l3 3', '#7c7c7c']],
  unlock: [['M9.5 8v-3c0-4 7-4 7 0v4h-2v-3c0-2-3-2-3 0v2', K, W], [r(1.5, 8.5, 10, 8), K, W], ['M6.5 11v3', K, N, 2]],
  hw: [[r(1.5, 3.5, 13, 7), K, '#7b8aa5'], ['M3.5 1v2M6.5 1v2M9.5 1v2M12.5 1v2M3.5 11v2M6.5 11v2', K], [c(13, 11, 3), B, '#d6effa'], [r(12, 14, 2, 3), K, W]],
  iso: [[c(9, 6, 4.5), '#b5862e', '#fdf0b8'], ['M6 9l2 4h2l2-4z', N, '#fdf0b8'], [r(7.5, 12.5, 3, 4), K, W]],
  cleanscreen: [[r(2.5, 2.5, 13, 13), K, W], ['M3 4h12', K, N, 2]],
  find: [['M2.5 8l2-6h3v6M15.5 8l-2-6h-3v6', K, '#ddd'], [r(1.5, 8.5, 6, 7), K, '#eee'], [r(10.5, 8.5, 6, 7), K, '#eee'], ['M7 6.5h4', K, N, 3]],
  person: [['M9 1.5c4 0 5 4 3 7-1 2 0 2 4 4v3h-15v-3c4-2 5-2 4-4-2-3-1-7 4-7z', K, W]],
  exchange: [['M1 2h5l3 4 3-4h5l-5 7 5 7h-5l-3-4-3 4h-5l5-7z', '#26479c', '#4e74c9'], ['M3 3l4 6-4 6', '#c9d6f2', N, 1.5]],
  a360: [['M7 2c3-2 5 2 3 5l-5 7c-3 1-5-2-3-4l4-4z', '#26479c', W], [r(8.5, 8.5, 8, 8), '#a8430e', '#e8762a'], ['M12.5 10v3M10.5 13h4l-2 2.500z', W, W]],
  qmark: [[c(9, 9, 8), K, W], { t: '?', x: 5, y: 14, size: 14, bold: true, fill: '#1d4fb0' }],
};

function Icon({ name, size = 'size-[18px]' }: { name: string; size?: string }) {
  return (
    <svg viewBox="0 0 18 18" className={`${size} shrink-0 overflow-visible`} aria-hidden="true">
      {icons[name].map((s, i) =>
        Array.isArray(s) ? (
          <path key={i} d={s[0]} stroke={s[1] ?? K} fill={s[2] ?? 'none'} strokeWidth={s[3] ?? 1} />
        ) : (
          <text key={i} x={s.x} y={s.y} fontSize={s.size} fontWeight={s.bold ? 700 : 400} fill={s.fill ?? K} fontFamily="Liberation Sans, sans-serif">
            {s.t}
          </text>
        ),
      )}
    </svg>
  );
}

function Caret({ className = 'w-2 text-[#9a9a9a]' }: { className?: string }) {
  return (
    <svg viewBox="0 0 8 4" className={`h-1 shrink-0 ${className}`} aria-hidden="true">
      <path d="M0 0h8l-4 4z" fill="currentColor" />
    </svg>
  );
}

function Tool({ name, className = 'w-[23px] pl-[2px]' }: { name: string; className?: string }) {
  return (
    <button type="button" title={name} className={`${className} h-[22px] shrink-0 flex items-center hover:bg-[#cfe6f5]`}>
      <Icon name={name} />
    </button>
  );
}

function Sep() {
  return (
    <div className="w-[6px] shrink-0 flex justify-center items-center">
      <div className="w-px h-[18px] bg-[#8a8a8a]" />
    </div>
  );
}

// "|" is a separator and "v" a small drop-down arrow, everything else is an icon name
function Tools({ list }: { list: string }) {
  return (
    <>
      {list.split(' ').map((name, i) => {
        if (name === '|') return <Sep key={i} />;
        if (name === 'v')
          return (
            <button key={i} type="button" title="More" className="w-[13px] h-[22px] shrink-0 flex items-center justify-center">
              <Caret className="w-[5px] text-[#8c8c8c]" />
            </button>
          );
        return <Tool key={i} name={name} />;
      })}
    </>
  );
}

function Toolbar({ children }: { children: ReactNode }) {
  return (
    <div className="h-6 flex items-center bg-[#ebebeb] border border-[#333]">
      <div className="w-2 self-stretch shrink-0 bg-[#5c5c5c] flex items-center justify-center">
        <div className="w-1 h-4 bg-[conic-gradient(#161616_25%,#8a8a8a_0_50%,#5c5c5c_0)] bg-[length:2px_2px]" />
      </div>
      {children}
    </div>
  );
}

function SideBar({ children }: { children: ReactNode }) {
  return (
    <div className="w-[25px] flex flex-col items-center bg-[#ebebeb] border border-[#333]">
      <div className="h-2 self-stretch bg-[#5c5c5c] flex items-center justify-center">
        <div className="h-1 w-[14px] bg-[conic-gradient(#161616_25%,#8a8a8a_0_50%,#5c5c5c_0)] bg-[length:2px_2px]" />
      </div>
      {children}
    </div>
  );
}

type ComboProps = { label: string; value: string; width: string; text?: string; children?: ReactNode };

function Combo({ label, value, width, text = 'pl-4 text-xs', children }: ComboProps) {
  return (
    <div className={`${width} h-[22px] shrink-0 flex items-center pr-1 bg-[#f3f3f3] border border-[#a3abae] rounded-xs`}>
      {children}
      <select aria-label={label} className={`${text} flex-1 min-w-0 h-5 appearance-none bg-transparent text-[#707070] outline-none`}>
        <option>{value}</option>
      </select>
      <Caret />
    </div>
  );
}

const MENUS = ['文件(F)', '编辑(E)', '视图(V)', '插入(I)', '格式(O)', '工具(T)', '绘图(D)', '标注(N)', '修改(M)', '参数(P)', '窗口(W)', '帮助(H)'];

function TitleBar() {
  return (
    <header className="flex bg-[#686868]">
      <button type="button" title="Application menu" className="w-[41px] h-[41px] shrink-0 flex items-center border border-[#333] bg-linear-to-br from-[#dcdcdc] to-[#8a8a8a]">
        <svg viewBox="0 0 26 34" className="w-[26px] h-[34px] ml-[2px]" aria-hidden="true">
          <path d="M2 31l6-8h16l-4 5z" fill="#5a5a5a" opacity=".5" />
          <path d="M8 2l8-1 8 25-7 3-3-6-6 2-2 6-5 1z" fill="#c81a18" />
          <path d="M12 1l4 0 8 25-4 1z" fill="#f25a4e" />
          <path d="M8 2l4-1-7 30-4 1z" fill="#e2332c" />
          <path d="M11 10l2 8-5 2z" fill="#d4d4d4" />
          <path d="M1 32c4-8 10-12 19-11l4 5-7 3-3-5c-4 1-6 3-8 7z" fill="#8d0c0c" opacity=".75" />
        </svg>
        <Caret className="w-[6px] ml-px text-[#222]" />
      </button>

      <div className="flex-1 min-w-0">
        <div className="h-6 flex items-center bg-linear-to-b from-[#939393] to-[#a6a6a6] text-[#222]">
          <div className="flex items-center pl-1">
            {['new', 'open', 'save', 'saveas', 'cloud', 'v', 'print', 'undo', 'v', 'redo', 'v'].map((n, i) =>
              n === 'v' ? (
                <span key={i} className="w-3 flex justify-center"><Caret className="w-[5px] text-[#333]" /></span>
              ) : (
                <Tool key={i} name={n} className="w-6 justify-center" />
              ),
            )}
          </div>
          <div className="w-[180px] h-[22px] shrink-0 flex items-center pl-[2px] pr-1 border border-[#7b7b7b] bg-linear-to-r from-[#a8a8a8] to-[#e4e4e4]">
            <Icon name="gear" />
            <select aria-label="Workspace" className="flex-1 min-w-0 appearance-none outline-none text-[13px] text-[#5c5c5c] bg-transparent">
              <option>AutoCAD 经典</option>
            </select>
            <Caret className="w-2 text-[#444]" />
          </div>
          <button type="button" title="Customize" className="w-4 shrink-0 flex flex-col items-center gap-[2px]">
            <span className="w-[7px] h-px bg-black" />
            <Caret className="w-[7px] text-black" />
          </button>
          <div className="flex-1 h-6 min-w-0 flex items-center gap-4 pl-[30px] whitespace-nowrap text-[13px] text-[#0c1a2a] bg-[radial-gradient(ellipse_at_8%_100%,#cfe2ee_0,transparent_16%),radial-gradient(ellipse_at_38%_100%,#6a83b4_0,transparent_18%),radial-gradient(ellipse_at_66%_90%,#e2eeda_0,transparent_15%),radial-gradient(ellipse_at_96%_100%,#d9dfc8_0,transparent_9%),linear-gradient(#2a63a6,#6ba4d8)]">
            <span>AutoCAD 2013</span>
            <span>Drawing1.dwg</span>
          </div>
          <button type="button" title="Expand" className="w-[14px] shrink-0 flex justify-center">
            <svg viewBox="0 0 5 8" className="w-[5px] h-2"><path d="M0 0l5 4-5 4z" /></svg>
          </button>
          <input
            aria-label="Search"
            placeholder="鍵入关鍵字或短语"
            className="w-[180px] h-[22px] shrink-0 px-[3px] border border-[#6b6b6b] bg-[#f4f4f4] text-[11px] italic placeholder:text-[#777] outline-none"
          />
          <div className="flex items-center">
            <Tool name="find" className="w-6 justify-center" />
            <Tool name="person" className="w-6 justify-center" />
            <button type="button" className="w-[86px] text-left text-xs text-white whitespace-nowrap">登录</button>
            <Caret className="w-[5px] text-[#444]" />
            <Tool name="exchange" className="w-[30px] justify-center" />
            <Tool name="a360" className="w-[18px]" />
            <Caret className="w-[5px] ml-[3px] text-[#444]" />
            <Tool name="qmark" className="ml-[18px] w-[26px] justify-center" />
            <Caret className="w-[5px] text-[#444]" />
          </div>
          <div className="w-[122px] h-6 shrink-0 ml-[5px] flex items-start justify-end pr-1 bg-[radial-gradient(ellipse_at_5%_100%,#d9ebf2_0,transparent_25%),radial-gradient(ellipse_at_62%_80%,#a9c1c6_0,transparent_22%),linear-gradient(#2c5f9c,#5286bd)]">
            <div className="flex h-[17px] rounded-b border border-t-0 border-[#8fb0d0] text-white">
              <button type="button" title="Minimize" className="w-[28px] border-r border-[#8fb0d0] flex justify-center items-center">
                <span className="w-[11px] h-1 bg-white border border-[#777]" />
              </button>
              <button type="button" title="Restore" className="w-[26px] border-r border-[#8fb0d0] flex justify-center items-center">
                <svg viewBox="0 0 12 12" className="size-3"><path d="M4 1h7v7h-3M1 4h7v7h-7z" fill="#666" stroke="#fff" strokeWidth="2" /></svg>
              </button>
              <button type="button" title="Close" className="w-[48px] flex justify-center items-center">
                <svg viewBox="0 0 12 12" className="size-3"><path d="M2 2l8 8M10 2l-8 8" stroke="#fff" strokeWidth="3" /></svg>
              </button>
            </div>
          </div>
        </div>

        <nav className="h-[21px] flex items-center gap-px pl-[2px] border-t border-[#444] bg-linear-to-b from-[#a2a2a2] to-[#5f5f5f] text-xs text-white">
          {MENUS.map(m => (
            <button key={m} type="button" className="px-3 whitespace-nowrap">{m}</button>
          ))}
          <div className="ml-auto flex gap-1 pr-1">
            {['M2 9h9', 'M4 5v-3h7v6h-3M1 5h7v5h-7z', 'M2 2l7 8M9 2l-7 8'].map((d, i) => (
              <button key={d} type="button" title={['Minimize drawing', 'Restore drawing', 'Close drawing'][i]}>
                <svg viewBox="0 0 12 12" className="size-3"><path d={d} fill="none" stroke="#222" strokeWidth="2" /></svg>
              </button>
            ))}
          </div>
        </nav>
      </div>
    </header>
  );
}

function LineSample({ width }: { width: string }) {
  return <span className={`${width} h-px shrink-0 ml-1 bg-black`} />;
}

function TopToolbars() {
  const mono = "text-[10px] font-['Liberation_Mono','Noto_Sans_CJK_SC',monospace]";
  return (
    <div className="flex flex-col gap-[3px] overflow-hidden">
      <div className="flex">
        <Toolbar>
          <Tools list="new open save | print preview publish globe | cut copy paste match blockedit | undo2 v redo2 v | pan zoomrt zoomwin zoomprev | props dc toolpal sheetset markup calc | help" />
        </Toolbar>
        <Toolbar>
          <Tool name="textstyle" />
          <Combo label="Text style" value="Standard" width="w-[121px]" text="pl-[18px] text-xs" />
          <Sep />
          <Tool name="dimstyle" />
          <Combo label="Dimension style" value="ISO-25" width="w-[120px]" text="pl-[18px] text-xs" />
          <Sep />
          <Tool name="tablestyle" />
          <Combo label="Table style" value="Standard" width="w-[120px]" text="pl-1 text-xs" />
          <Sep />
          <Tool name="mleader" />
          <Combo label="Multileader style" value="Standard" width="w-[120px]" text="pl-[18px] text-xs" />
        </Toolbar>
      </div>

      <div className="flex">
        <Toolbar>
          <Combo label="Workspace" value="AutoCAD 经典" width="w-[175px]" text="pl-2 text-xs" />
          <Tools list="gear wsset" />
        </Toolbar>
        <Toolbar>
          <Tool name="layers" />
          <Combo label="Layer" value="0" width="w-[299px]" text="pl-1 text-xs">
            <Icon name="bulb" size="size-4" />
            <Icon name="sun" size="size-4" />
            <Icon name="vpfreeze" size="size-4 ml-[2px]" />
            <Icon name="lock" size="size-4 ml-[2px]" />
            <span className="size-[10px] shrink-0 border border-black bg-white" />
          </Combo>
          <Tools list="layerA layerB layerC" />
        </Toolbar>
        <Toolbar>
          <Combo label="Color" value="ByLayer" width="w-[151px]" text={`pl-1 ${mono}`}>
            <span className="size-[10px] shrink-0 ml-1 border border-black bg-white" />
          </Combo>
          <Sep />
          <Combo label="Linetype" value="ByLayer" width="w-[160px]" text={`pl-5 ${mono}`}>
            <LineSample width="w-[44px]" />
          </Combo>
          <Sep />
          <Combo label="Lineweight" value="ByLayer" width="w-[125px]" text={`pl-1 ${mono}`}>
            <LineSample width="w-[35px]" />
          </Combo>
          <Sep />
          <Combo label="Plot style" value="BYCOLOR" width="w-[120px]" text={`pl-2 ${mono}`} />
        </Toolbar>
      </div>

      <div className="flex">
        <Toolbar>
          <Tools list="polysolid box wedge cone sphere cylinder torus pyramid helix planesurf | extrude presspull sweep revolve loft | union subtract intersect | move3d rotate3d align3d array3d" />
        </Toolbar>
        <Toolbar>
          <Tools list="union subtract intersect | extrudeface moveface offsetface deleteface rotateface taperface copyface colorface | filletedge chamferedge copyedge coloredge | imprint clean separate shell check" />
        </Toolbar>
        <Toolbar>
          <Tools list="wire2d | wire3d hidden realistic conceptual | vsmanager" />
        </Toolbar>
      </div>

      <div className="flex">
        <Toolbar>
          <Tools list="namedview | vtop vbottom vleft vright vfront vback | sw se ne nw | camera | camzoom" />
          <Combo label="View" value="" width="w-[138px]" />
        </Toolbar>
      </div>
    </div>
  );
}

const LEFT = 'line xline pline polygon rect arc circle revcloud spline ellipse ellipsearc insert block point hatch gradient region table mtext addsel';
const RIGHT = 'erase copyobj mirror offset array move rotate scale stretch trim extend breakpt break join chamfer fillet blend explode';

function Model() {
  return (
    <svg className="absolute inset-0 size-full" aria-label="Drawing">
      <g fill="none" stroke="#fff" shapeRendering="crispEdges">
        <ellipse cx="611" cy="383.5" rx="394.5" ry="228" />
        <ellipse cx="611" cy="448" rx="394.5" ry="228" />
        <path d="M112.5 459A499.5 288 0 0 1 523 164l19 60M112.5 459l104-3" />
        <path d="M331.5 222v65M889.5 222v65M331.5 545v65M889.5 545v65" />
        <path d="M48.5 678v-39M48.5 678l-34-19M48.5 678l34-19M42 678l6-3 7 3-7 4zM44 676l9 4M53 676l-9 4" />
      </g>
      <g fill="#fff" fontFamily="Lato, sans-serif" fontWeight="300" fontSize="18">
        <text x="53" y="637">Z</text>
        <text x="15" y="654">Y</text>
        <text x="88" y="657">X</text>
      </g>
    </svg>
  );
}

function ViewCube() {
  return (
    <div className="absolute right-[15px] top-[40px] w-[132px] flex flex-col items-center">
      <svg viewBox="0 0 132 112" className="w-[132px] h-[112px]" aria-label="ViewCube">
        <ellipse cx="66" cy="67" rx="55" ry="34" fill="none" stroke="#464a52" strokeWidth="13" />
        <g fill="#b5b7b9" fontFamily="Noto Sans CJK SC, sans-serif" fontSize="14">
          <text x="20" y="44" transform="rotate(24 27 39)">北</text>
          <text x="97" y="44" transform="rotate(-24 104 39)">东</text>
        </g>
        <path d="M66 4l34 18-2 36-32 21-32-21-2-36z" fill="#a9abad" stroke="#5b5e62" />
        <path d="M32 22l34 19 34-19-34-18z" fill="#b3b5b7" />
        <path d="M66 41l34-19-2 36-32 21z" fill="#9b9d9f" />
        <path d="M32 22l34 19 34-19M66 41v38" fill="none" stroke="#55585c" strokeDasharray="2 1" />
        <path d="M66 34l7 4v7l-7 4-7-4v-7z" fill="#8b97a3" opacity=".8" />
        <g fill="#3c444c" fontFamily="Noto Sans CJK SC, sans-serif" fontSize="19" fontWeight="300">
          <text x="58" y="28" transform="rotate(-28 68 21)">上</text>
          <text x="39" y="57" transform="rotate(14 49 50)">左</text>
          <text x="74" y="57" transform="rotate(-14 84 50)">前</text>
        </g>
        <g fill="#b5b7b9" fontFamily="Noto Sans CJK SC, sans-serif" fontSize="19">
          <text x="12" y="97" transform="rotate(-30 21 91)">西</text>
          <text x="104" y="97" transform="rotate(30 113 91)">南</text>
        </g>
      </svg>
      <button type="button" className="mt-[14px] w-[58px] h-[17px] flex items-center justify-center gap-1 rounded bg-[#9697a5] border border-[#7b7c88] text-[11px] text-[#c9c9d2]">
        未命名
        <svg viewBox="0 0 9 6" className="w-[9px] h-[6px]"><path d="M1 1h7l-3.5 4z" fill="none" stroke="#c9c9d2" /></svg>
      </button>
    </div>
  );
}

function Arrow({ d }: { d: string }) {
  return <svg viewBox="0 0 8 8" className="size-2"><path d={d} fill="#333" /></svg>;
}

function DrawingWindow() {
  const [tab, setTab] = useState('模型');
  return (
    <section className="flex-1 min-w-0 flex flex-col border-2 border-[#a8a8a8] border-b-white border-r-white bg-[#efefef]">
      <div className="flex-1 flex min-h-[400px]">
        <div className="relative flex-1 min-w-0 overflow-hidden bg-[#222830]">
          <p className="pl-1 pt-[5px] text-xs leading-4 text-[#e4e4e4]">[−][西南等轴测][二维线框 ]</p>
          <Model />
          <ViewCube />
        </div>
        <div className="w-[17px] flex flex-col items-center justify-between bg-[#ececec] py-1">
          <div className="flex flex-col items-center gap-[6px] pt-px">
            <button type="button" title="Scroll up" className="h-2"><Arrow d="M0 6l4-4 4 4z" /></button>
            <div className="w-[15px] h-[15px] rounded-xs border border-[#8b8b8b] bg-linear-to-r from-[#f8f8f8] to-[#c9c9cc]" />
          </div>
          <button type="button" title="Scroll down"><Arrow d="M0 2l4 4 4-4z" /></button>
        </div>
      </div>

      <div className="h-[15px] flex items-center border-t border-[#777] text-xs leading-3 text-black">
        {['M1 0h1v8h-1zM7 0v8l-4-4z', 'M6 0v8l-4-4z', 'M2 0v8l4-4z', 'M6 0h1v8h-1zM1 0v8l4-4z'].map((d, i) => (
          <button key={d} type="button" title={['First', 'Previous', 'Next', 'Last'][i]} className="w-[14px] h-[13px] flex items-center justify-center border-r border-[#8a8a8a]">
            <Arrow d={d} />
          </button>
        ))}
        <button type="button" onClick={() => setTab('模型')} aria-pressed={tab === '模型'} className="w-[46px] h-[14px] bg-[#222830] text-white [clip-path:polygon(0_0,100%_0,88%_100%,12%_100%)]">
          模型
        </button>
        {['布局1', '布局2'].map(t => (
          <button key={t} type="button" onClick={() => setTab(t)} aria-pressed={tab === t} className="h-[14px] flex items-center pl-[4px] gap-1">
            {t}
            <svg viewBox="0 0 8 14" className="w-2 h-[14px]"><path d="M7.5 0l-6 14" stroke="#333" fill="none" /></svg>
          </button>
        ))}
        <div className="ml-auto w-[426px] flex items-center">
          <span className="w-[5px] h-3 border border-[#999] bg-white" />
          <button type="button" title="Scroll left" className="ml-1"><Arrow d="M6 0v8l-4-4z" /></button>
          <span className="ml-auto w-[15px] h-3 rounded-xs border border-[#8b8b8b] bg-linear-to-b from-[#f8f8f8] to-[#c9c9cc]" />
          <button type="button" title="Scroll right" className="mx-[6px]"><Arrow d="M2 0v8l4-4z" /></button>
          <span className="w-[15px]" />
        </div>
      </div>
    </section>
  );
}

function CommandLine() {
  return (
    <section className="flex border-t border-[#8a8a8a] font-['Liberation_Mono','Noto_Sans_CJK_SC',monospace] text-[13px] leading-[15px] text-black">
      <div className="w-[23px] shrink-0 flex flex-col items-center bg-linear-to-b from-[#8a8a8a] to-[#555]">
        <div className="mt-1 h-1 w-4 bg-[conic-gradient(#ddd_25%,transparent_0)] bg-[length:3px_2px]" />
        <button type="button" title="Close command line" className="mt-2">
          <svg viewBox="0 0 10 10" className="size-[10px]"><path d="M1 1l8 8M9 1l-8 8" stroke="#eee" strokeWidth="2" /></svg>
        </button>
        <button type="button" title="Customize command line" className="mt-3">
          <svg viewBox="0 0 14 14" className="size-[14px]"><path d="M1 3l3 2 1-1-2-3c3-1 5 1 4 4l6 6-2 2-6-6c-3 1-5-1-4-4z" fill="#eee" /></svg>
        </button>
      </div>
      <div className="flex-1 min-w-0">
        <div className="h-[33px] overflow-hidden bg-[#c7c7c7] px-[3px] whitespace-pre">
          <p>当前线框密度:  ISOLINES=4，闭合轮廓创建模式 = 实体</p>
          <p>选择要拉伸的对象或 [模式(MO)]: _MO 闭合轮廓创建模式 [实体(SO)/曲面(SU)] &lt;实体&gt;: _SO</p>
        </div>
        <label className="h-6 flex items-center bg-white border-t border-[#777] pl-1 whitespace-pre">
          <Icon name="extrude" />
          <Caret className="ml-px w-[5px] text-[#777]" />
          <b className="ml-2">EXTRUDE</b> 选择要拉伸的对象或 [<span className="bg-[#d5d5d5] rounded-sm">模式(<span className="text-[#0000e0]">MO</span>)</span>]:
          <input aria-label="Command" className="flex-1 min-w-0 outline-none" />
        </label>
      </div>
    </section>
  );
}

const STATUS = 'infer snap grid ortho polar osnap osnap3d otrack ducs dyn lwt tpy qp sc am';
const STATUS_ON = ['osnap', 'otrack', 'ducs', 'tpy'];

function StatusButton({ name, className = 'w-[22px] bg-[#b4b4b4]', pressed }: { name: string; className?: string; pressed?: boolean }) {
  return (
    <button type="button" title={name} aria-pressed={pressed} className={`${className} h-5 pl-px shrink-0 flex items-center border-r border-[#555]`}>
      <Icon name={name} />
    </button>
  );
}

function StatusBar() {
  return (
    <footer className="h-[22px] flex items-center border-t-2 border-[#222] border-b border-b-[#12304a] bg-linear-to-b from-[#787878] to-[#929292] text-xs text-black">
      <div className="w-[218px] h-5 shrink-0 flex items-center pl-3 whitespace-pre border-r border-[#444] text-[10px] text-[#a0a0a0] font-['Liberation_Mono',monospace]">
        2905.3318, 2623.9532, 0.0000
      </div>
      {STATUS.split(' ').map(n => {
        const on = STATUS_ON.includes(n);
        return <StatusButton key={n} name={n} pressed={on} className={on ? 'w-[22px] bg-[#b3dbe6]' : 'w-[22px] bg-[#b4b4b4]'} />;
      })}
      <div className="flex-1" />
      <button type="button" className="w-[30px] h-5 shrink-0 border-x border-[#555] bg-[#b4b4b4]">模型</button>
      <StatusButton name="sheet" />
      <StatusButton name="qview" />
      <button type="button" title="Annotation scale" className="w-[54px] h-5 ml-[18px] shrink-0 flex items-center justify-center gap-[2px] border-x border-[#555] bg-[#b4b4b4] text-[11px]">
        <Icon name="anno" />
        1:1
        <Caret className="w-[7px] text-black" />
      </button>
      <StatusButton name="annovis" />
      <StatusButton name="annoauto" className="w-[22px] bg-[#a6a6a6]" />
      <StatusButton name="gear" className="w-[22px] ml-[6px] bg-[#b4b4b4]" />
      <StatusButton name="unlock" />
      <StatusButton name="hw" />
      <StatusButton name="iso" className="w-[27px] justify-center bg-[#8a8a8a]" />
      <button type="button" title="Status bar menu" className="w-[18px] h-5 shrink-0 flex items-center justify-center border-r border-[#555] bg-[#b4b4b4]">
        <Caret className="w-[6px] text-black" />
      </button>
      <StatusButton name="cleanscreen" />
    </footer>
  );
}

function Callout() {
  return (
    <svg viewBox="0 0 140 190" className="absolute left-[140px] top-[80px] w-[140px] h-[190px] pointer-events-none" aria-hidden="true">
      <g fill="none" stroke="#ff0000" strokeWidth="4" strokeLinecap="round">
        <path d="M106 6h28v45h-28z" />
        <path d="M12 177L114 44M95 51l20-10-3 20" />
      </g>
    </svg>
  );
}

function Watermark() {
  return (
    <svg viewBox="0 0 240 115" className="absolute right-[60px] bottom-[22px] w-[240px] h-[115px] pointer-events-none" aria-hidden="true">
      <g fill="#fff" opacity=".72">
        <text x="1" y="71" fontFamily="Liberation Sans, sans-serif" fontWeight="700" fontSize="50">Bai</text>
        <ellipse cx="89" cy="28" rx="8" ry="11" />
        <ellipse cx="105" cy="13" rx="8" ry="11" />
        <ellipse cx="126" cy="14" rx="8" ry="11" />
        <ellipse cx="138" cy="34" rx="8" ry="11" />
        <path d="M113 31c7 0 11 7 16 13 7 7 13 12 13 19 0 7-7 9-14 9-6 0-9-1-15-1s-10 1-16 1c-7 0-11-4-11-10 0-7 7-12 13-18 5-6 7-13 14-13z" />
        <text x="150" y="69" fontFamily="Noto Sans CJK SC, sans-serif" fontWeight="700" fontSize="38">经验</text>
      </g>
      <text x="98" y="65" fill="#8f8f8f" fontFamily="Liberation Sans, sans-serif" fontWeight="700" fontSize="28">du</text>
      <text x="3" y="101" fill="#fff" stroke="#c8c8c8" strokeWidth="2" paintOrder="stroke" opacity=".8" fontFamily="Open Sans, sans-serif" fontSize="26">
        jingyan.baidu.com
      </text>
    </svg>
  );
}

function Gradients() {
  return (
    <svg className="absolute size-0" aria-hidden="true">
      <defs>
        <linearGradient id="metal"><stop stopColor="#a4a9b2" /><stop offset=".4" stopColor="#fff" /><stop offset="1" stopColor="#9ba0aa" /></linearGradient>
        <linearGradient id="fade" x2="0" y2="1"><stop stopColor="#68707c" /><stop offset="1" stopColor="#f2f2f2" /></linearGradient>
        <radialGradient id="steel" cx=".35" cy=".3"><stop stopColor="#fff" /><stop offset="1" stopColor="#a9aeb8" /></radialGradient>
        <radialGradient id="blue" cx=".35" cy=".3"><stop stopColor="#62b2ee" /><stop offset="1" stopColor="#1058a5" /></radialGradient>
        <radialGradient id="gooch" cx=".35" cy=".3"><stop stopColor="#ffe43e" /><stop offset=".45" stopColor="#d98a3a" /><stop offset=".8" stopColor="#3b2f9a" /></radialGradient>
      </defs>
    </svg>
  );
}

export default function App() {
  return (
    <div className="relative min-h-screen flex flex-col overflow-hidden bg-[#686868] font-['Open_Sans','Noto_Sans_CJK_SC',sans-serif]">
      <Gradients />
      <TitleBar />
      <TopToolbars />

      <main className="flex-1 flex items-start gap-1 pt-1 pr-[3px]">
        <SideBar>
          {LEFT.split(' ').map(n => <Tool key={n} name={n} />)}
        </SideBar>
        <div className="flex-1 min-w-0 self-stretch flex"><DrawingWindow /></div>
        <div className="flex flex-col gap-px">
          <SideBar>
            {RIGHT.split(' ').map(n => <Tool key={n} name={n} />)}
          </SideBar>
          <SideBar>
            {['above', 'below', 'front', 'back'].map(n => <Tool key={n} name={n} />)}
            <div className="w-[19px] h-px my-[2px] bg-[#8a8a8a]" />
            {['annofront', 'hatchback'].map(n => <Tool key={n} name={n} />)}
          </SideBar>
        </div>
      </main>

      <div className="flex pl-[29px] pt-1 pb-2">
        <Toolbar>
          <Tools list="linear aligned arclen ordinate | radius jogged diameter angular | quick baseline continue space dimbreak | tolerance center inspect jogline | dimedit dimtext dimupdate |" />
          <Combo label="Dimension style" value="ISO-25" width="w-[120px]" text="pl-[18px] text-xs" />
          <Tool name="dimstyle" />
        </Toolbar>
      </div>

      <CommandLine />
      <StatusBar />
      <Callout />
      <Watermark />
    </div>
  );
}
